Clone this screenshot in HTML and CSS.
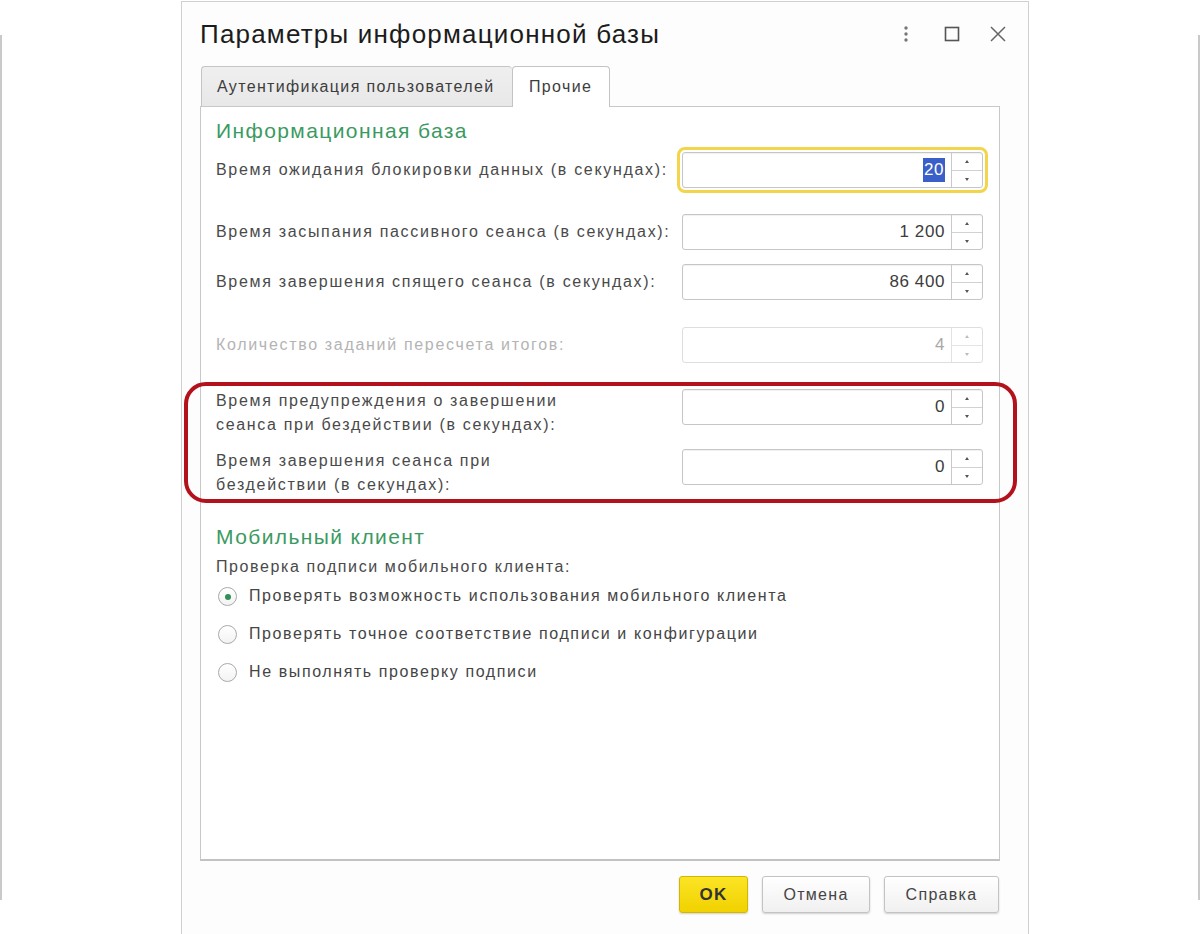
FILE: index.html
```html
<!DOCTYPE html>
<html lang="ru">
<head>
<meta charset="utf-8">
<title>Параметры информационной базы</title>
<link rel="stylesheet" href="styles.css">
</head>
<body>
<div class="page">
  <div class="edge edge-left"></div>
  <div class="dialog">
    <div class="header">
      <div class="title">Параметры информационной базы</div>
      <div class="win-icons">
        <span class="wi"><svg width="20" height="20" viewBox="0 0 20 20"><circle cx="10" cy="4" r="1.7" fill="#777"/><circle cx="10" cy="10" r="1.7" fill="#777"/><circle cx="10" cy="16" r="1.7" fill="#777"/></svg></span>
        <span class="wi"><svg width="20" height="20" viewBox="0 0 20 20"><rect x="3.5" y="3.5" width="13" height="13" fill="none" stroke="#555" stroke-width="1.6"/></svg></span>
        <span class="wi"><svg width="20" height="20" viewBox="0 0 20 20"><path d="M3 3 L17 17 M17 3 L3 17" stroke="#666" stroke-width="1.5" fill="none"/></svg></span>
      </div>
    </div>
    <div class="tabs">
      <div class="tab">Аутентификация пользователей</div>
      <div class="tab tab-active">Прочие</div>
    </div>
    <div class="panel">
      <div class="group-title">Информационная база</div>

      <div class="row row-1">
        <div class="label">Время ожидания блокировки данных (в секундах):</div>
        <div class="field field-focus">
          <div class="value"><span class="sel">20</span></div>
          <div class="spin"><span class="up"></span><span class="down"></span></div>
        </div>
      </div>

      <div class="row row-2">
        <div class="label">Время засыпания пассивного сеанса (в секундах):</div>
        <div class="field">
          <div class="value">1 200</div>
          <div class="spin"><span class="up"></span><span class="down"></span></div>
        </div>
      </div>

      <div class="row row-3">
        <div class="label">Время завершения спящего сеанса (в секундах):</div>
        <div class="field">
          <div class="value">86 400</div>
          <div class="spin"><span class="up"></span><span class="down"></span></div>
        </div>
      </div>

      <div class="row row-4 disabled">
        <div class="label">Количество заданий пересчета итогов:</div>
        <div class="field">
          <div class="value">4</div>
          <div class="spin"><span class="up"></span><span class="down"></span></div>
        </div>
      </div>

      <div class="row row-5 row-multi">
        <div class="label"><span class="wrap">Время предупреждения о завершении сеанса при бездействии (в секундах):</span></div>
        <div class="field">
          <div class="value">0</div>
          <div class="spin"><span class="up"></span><span class="down"></span></div>
        </div>
      </div>

      <div class="row row-6 row-multi">
        <div class="label"><span class="wrap wrap-narrow">Время завершения сеанса при бездействии (в секундах):</span></div>
        <div class="field">
          <div class="value">0</div>
          <div class="spin"><span class="up"></span><span class="down"></span></div>
        </div>
      </div>

      <div class="group-title group-mobile">Мобильный клиент</div>
      <div class="plain">Проверка подписи мобильного клиента:</div>
      <div class="radio-row"><span class="radio checked"></span><span class="rtext">Проверять возможность использования мобильного клиента</span></div>
      <div class="radio-row"><span class="radio"></span><span class="rtext">Проверять точное соответствие подписи и конфигурации</span></div>
      <div class="radio-row"><span class="radio"></span><span class="rtext">Не выполнять проверку подписи</span></div>
    </div>
    <div class="footer">
      <button class="btn btn-ok">OK</button>
      <button class="btn">Отмена</button>
      <button class="btn btn-help">Справка</button>
    </div>
    <div class="annotation"></div>
  </div>
  <div class="edge edge-right"></div>
</div>
</body>
</html>
```
FILE: styles.css
```css
* { box-sizing: border-box; }
html, body { margin: 0; padding: 0; background: #fff; }
body {
  font-family: "Liberation Sans", Arial, sans-serif;
  color: #4a4a4a;
}
.page {
  display: flex;
  width: 1200px;
  height: 934px;
  overflow: hidden;
}
.edge {
  width: 2px;
  height: 865px;
  margin-top: 35px;
  background: #c9c9c9;
  flex: 0 0 2px;
}
.edge-right { margin-left: auto; }

.dialog {
  position: relative;
  flex: 0 0 848px;
  margin-left: 179px;
  margin-top: 1px;
  height: 960px;
  border: 1px solid #d0d0d0;
  background: #fdfdfd;
  padding: 0 28px 0 18px;
}
.header {
  height: 64px;
  display: flex;
  align-items: center;
}
.title {
  font-size: 26px;
  letter-spacing: 1.2px;
  color: #1c1c1c;
  padding-top: 1px;
}
.win-icons {
  margin-left: auto;
  margin-right: -8px;
  display: flex;
  gap: 26px;
  align-items: center;
}
.wi { width: 20px; height: 20px; display: block; }
.wi svg { display: block; }

.tabs {
  display: flex;
  height: 40px;
  align-items: flex-end;
  position: relative;
  z-index: 1;
}
.tab {
  height: 40px;
  font-size: 16px;
  letter-spacing: 1.35px;
  white-space: nowrap;
  color: #3d3d3d;
  display: flex;
  align-items: center;
  padding: 0 15px;
  border: 1px solid #c4c4c4;
  border-bottom: none;
  border-radius: 4px 4px 0 0;
}
.tab:first-child {
  margin-left: 1px;
  width: 311px;
  flex: 0 0 311px;
  padding-right: 0;
  background: linear-gradient(#efefef, #e8e8e8);
  border-right: none;
}
.tab-active {
  width: 98px;
  height: 41px;
  margin-bottom: -1px;
  background: #fff;
  padding-left: 16px;
}
.panel {
  height: 755px;
  background: #fff;
  border: 1px solid #c8c8c8;
  border-bottom: 2px solid #c2c2c2;
  padding: 11px 15px 0 15px;
}
.group-title {
  font-size: 21px;
  letter-spacing: 1.4px;
  line-height: 26px;
  color: #3b9a61;
}
.row {
  display: flex;
  align-items: center;
}
.row-1 { margin-top: 8px; }
.row-2 { margin-top: 26px; }
.row-3 { margin-top: 14px; }
.row-4 { margin-top: 27px; }
.row-5 { margin-top: 26px; }
.row-6 { margin-top: 12px; }
.row-multi { align-items: flex-start; }
.label {
  width: 466px;
  flex: 0 0 466px;
  font-size: 16px;
  letter-spacing: 1.68px;
  line-height: 20px;
  color: #4a4a4a;
  white-space: nowrap;
}
.row-multi .label { white-space: normal; line-height: 24px; }
.wrap { display: block; width: 370px; }
.wrap-narrow { width: 300px; }
.disabled .label { color: #b4b4b4; }

.field {
  width: 301px;
  height: 36px;
  display: flex;
  border: 1px solid #c6c6c6;
  border-radius: 3px;
  background: #fff;
  box-shadow: inset 0 1px 1px rgba(0,0,0,0.06);
}
.field-focus {
  outline: 3px solid #f2d54a;
  outline-offset: 2px;
}
.value {
  flex: 1;
  text-align: right;
  font-size: 17px;
  letter-spacing: 0.6px;
  color: #3c3c3c;
  display: flex;
  align-items: center;
  justify-content: flex-end;
  padding-right: 6px;
}
.sel {
  background: #3a5fc8;
  color: #fff;
  padding: 1px 1px;
  line-height: 22px;
}
.spin {
  width: 31px;
  border-left: 1px solid #c9c9c9;
  display: flex;
  flex-direction: column;
}
.spin span {
  flex: 1;
  position: relative;
}
.spin .up { border-bottom: 1px solid #d2d2d2; }
.spin .up::after, .spin .down::after {
  content: "";
  position: absolute;
  left: 13px;
  width: 0;
  height: 0;
  border-left: 2px solid transparent;
  border-right: 2px solid transparent;
}
.spin .up::after { top: 7px; border-bottom: 3px solid #555; }
.spin .down::after { bottom: 6px; border-top: 3px solid #555; }
.disabled .field { border-color: #dedede; box-shadow: none; }
.disabled .value { color: #a8a8a8; }
.disabled .spin { border-left-color: #e2e2e2; }
.disabled .spin .up { border-bottom-color: #e4e4e4; }
.disabled .spin .up::after { border-bottom-color: #bdbdbd; }
.disabled .spin .down::after { border-top-color: #bdbdbd; }

.group-mobile { margin-top: 27px; }
.plain {
  font-size: 16px;
  letter-spacing: 1.6px;
  line-height: 20px;
  margin-top: 7px;
  color: #4a4a4a;
}
.radio-row {
  height: 38px;
  display: flex;
  align-items: center;
  font-size: 16px;
  letter-spacing: 1.6px;
  color: #454545;
}
.radio {
  width: 19px;
  height: 19px;
  border-radius: 50%;
  border: 1px solid #a9a9a9;
  background: linear-gradient(#fff, #f3f3f3);
  margin-left: 2px;
  margin-right: 12px;
  position: relative;
  flex: 0 0 19px;
}
.radio.checked::after {
  content: "";
  position: absolute;
  left: 6px;
  top: 6px;
  width: 6px;
  height: 6px;
  border-radius: 50%;
  background: #2f8f57;
}

.footer {
  display: flex;
  justify-content: flex-end;
  gap: 14px;
  margin-top: 15px;
  padding-right: 1px;
}
.btn {
  height: 37px;
  font-family: "Liberation Sans", Arial, sans-serif;
  font-size: 16px;
  letter-spacing: 1.3px;
  color: #444;
  border: 1px solid #c3c3c3;
  border-radius: 3px;
  background: linear-gradient(#ffffff, #f0f0f0);
  box-shadow: 0 1px 2px rgba(0,0,0,0.18);
  padding: 0;
  width: 108px;
}
.btn-ok {
  width: 69px;
  font-weight: bold;
  font-size: 17px;
  color: #333;
  background: linear-gradient(#fbe425, #f1d200);
  border-color: #d2b600;
}
.btn-help { width: 115px; }

.annotation {
  position: absolute;
  left: 2px;
  top: 380px;
  width: 833px;
  height: 121px;
  border: 4px solid #b3121d;
  border-radius: 22px;
  pointer-events: none;
}
```
